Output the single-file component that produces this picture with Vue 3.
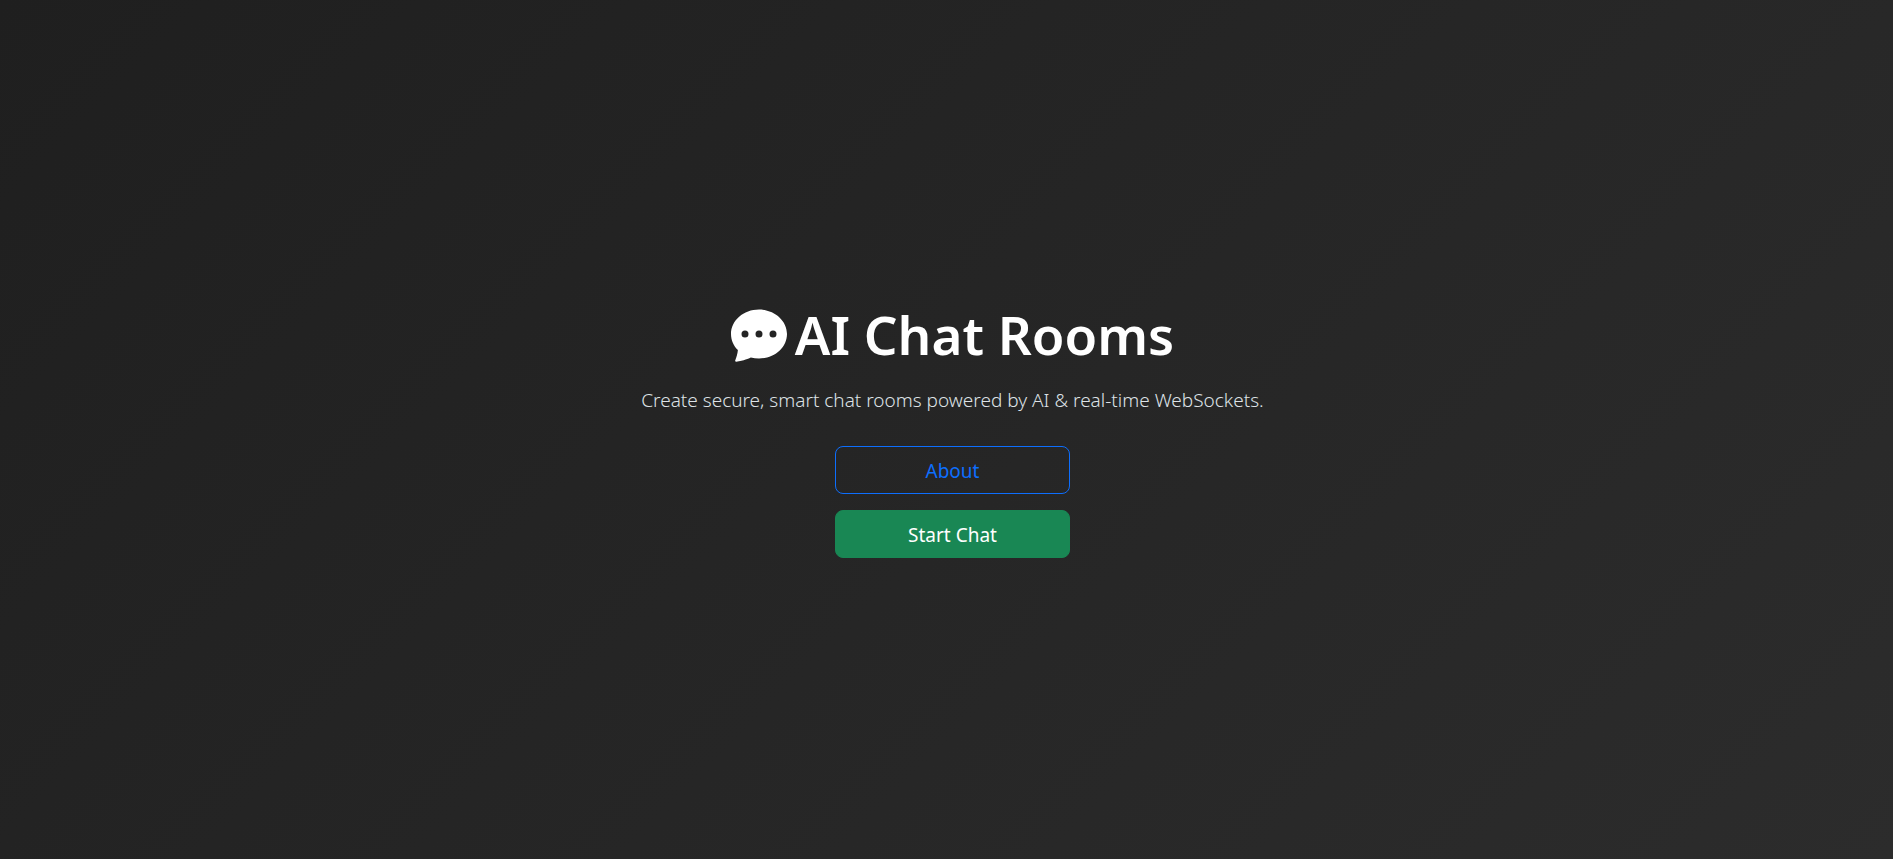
<script setup>
const title = 'AI Chat Rooms'
const tagline = 'Create secure, smart chat rooms powered by AI & real-time WebSockets.'
</script>

<template>
  <main class="hero">
    <h1 class="title">
      <svg class="icon" viewBox="0 0 16 16" fill="currentColor" aria-hidden="true">
        <path d="M16 8c0 3.866-3.582 7-8 7a9 9 0 0 1-2.347-.306c-.584.296-1.925.864-4.181 1.234-.2.032-.352-.176-.273-.362.354-.836.674-1.95.77-2.966C.744 11.37 0 9.76 0 8c0-3.866 3.582-7 8-7s8 3.134 8 7M5 8a1 1 0 1 0-2 0 1 1 0 0 0 2 0m4 0a1 1 0 1 0-2 0 1 1 0 0 0 2 0m3 1a1 1 0 1 0 0-2 1 1 0 0 0 0 2" />
      </svg>
      <span>{{ title }}</span>
    </h1>
    <p class="tagline">{{ tagline }}</p>
    <div class="actions">
      <button type="button" class="btn outline">About</button>
      <button type="button" class="btn solid">Start Chat</button>
    </div>
  </main>
</template>

<style>
body {
  margin: 0;
  background: #1f1f1f;
}
</style>

<style scoped>
.hero {
  box-sizing: border-box;
  min-height: 100vh;
  padding-left: 12px;
  display: flex;
  flex-direction: column;
  align-items: center;
  justify-content: center;
  text-align: center;
  color: #fff;
  background: linear-gradient(135deg, #1f1f1f, #2c2c2c);
  font-family: "Noto Sans", "Liberation Sans", sans-serif;
}

.title {
  display: flex;
  align-items: center;
  gap: 8px;
  margin: 0 0 16px;
  font-size: 53px;
  font-weight: 600;
  line-height: 67px;
}

.icon {
  width: 56px;
  height: 56px;
  margin-bottom: 2px;
}

.tagline {
  margin: 0 0 30px;
  font-size: 19px;
  font-weight: 300;
  line-height: 32px;
  color: #dee2e6;
}

.actions {
  display: flex;
  flex-direction: column;
  gap: 16px;
  width: 235px;
}

.btn {
  padding: 9px 16px 7px;
  border: 1px solid;
  border-radius: 8px;
  font: inherit;
  font-size: 19px;
  line-height: 30px;
  cursor: pointer;
}

.outline {
  color: #0d6efd;
  border-color: #0d6efd;
  background: transparent;
}

.solid {
  color: #fff;
  border-color: #198754;
  background: #198754;
}
</style>
